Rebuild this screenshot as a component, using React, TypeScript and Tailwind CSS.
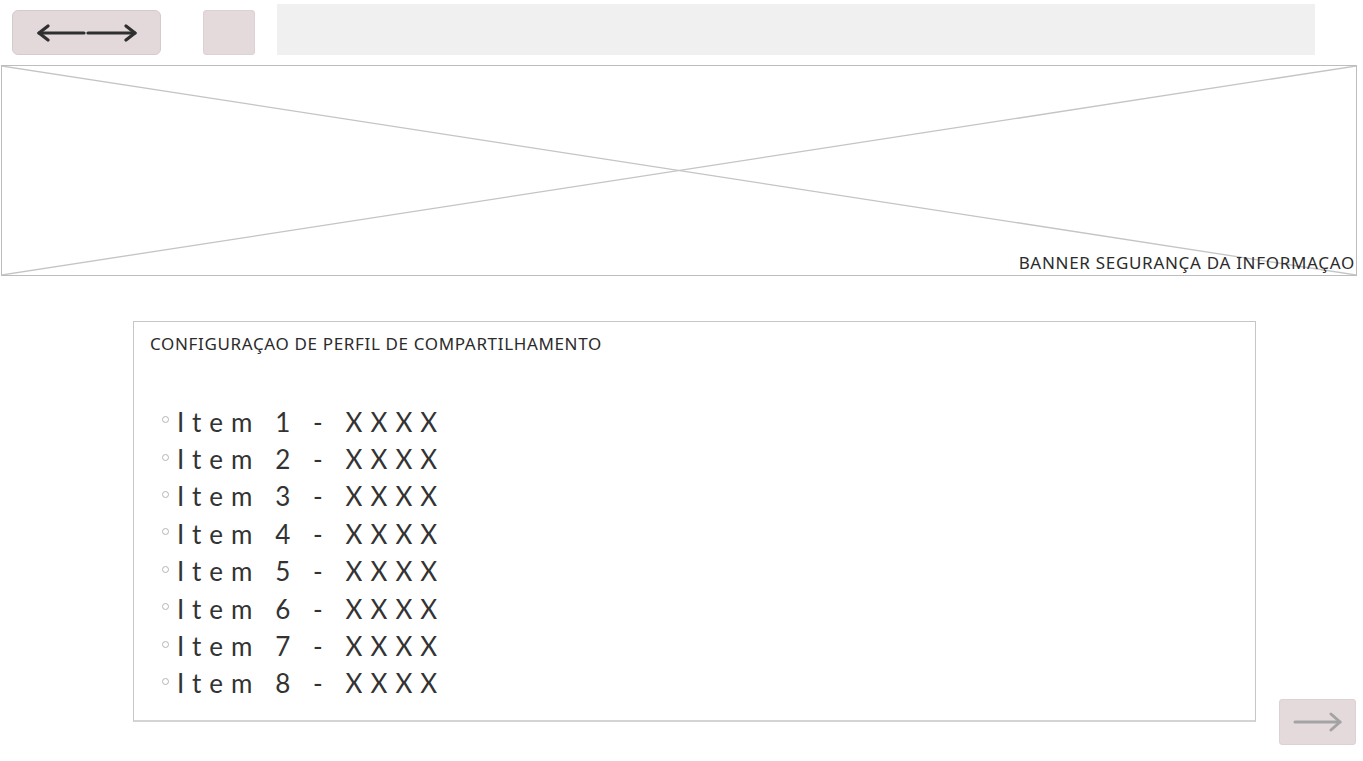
import React from "react";

const items = [1, 2, 3, 4, 5, 6, 7, 8];

function DoubleArrow() {
  return (
    <svg width="100" height="20" viewBox="0 0 100 20" fill="none" stroke="#2f2f2f" strokeWidth="3.2" strokeLinecap="round" strokeLinejoin="round">
      <path d="M2 10 H47" />
      <path d="M11 3 L2 10 L11 17" />
      <path d="M51 10 H98" />
      <path d="M89 3 L98 10 L89 17" />
    </svg>
  );
}

function NextArrow() {
  return (
    <svg width="50" height="20" viewBox="0 0 50 20" fill="none" stroke="#a3a3a3" strokeWidth="3" strokeLinecap="round" strokeLinejoin="round">
      <path d="M2 10 H47" />
      <path d="M38 2 L47 10 L38 18" />
    </svg>
  );
}

export default function App() {
  return (
    <div className="w-[1363px] h-[761px] bg-white overflow-hidden font-['Noto_Sans',sans-serif] text-[#333]">
      {/* top bar */}
      <div className="flex items-start pt-[4px]">
        <button className="mt-[6px] ml-[12px] w-[149px] h-[45px] rounded-[6px] bg-[#e3d8da] border border-[#d6cacd] flex items-center justify-center">
          <DoubleArrow />
        </button>
        <div className="mt-[6px] ml-[42px] w-[52px] h-[45px] rounded-[3px] bg-[#e4dadc] border border-[#dcd1d3]" />
        <div className="ml-[22px] w-[1038px] h-[51px] bg-[#f0f0f0]" />
      </div>

      {/* banner */}
      <div className="relative mt-[10px] ml-[1px] w-[1356px] h-[211px] border border-[#bdbdbd] flex items-end justify-end">
        <svg className="absolute inset-0 w-full h-full" viewBox="0 0 1354 209" preserveAspectRatio="none">
          <line x1="0" y1="0" x2="1354" y2="209" stroke="#c4c4c4" strokeWidth="1.3" />
          <line x1="1354" y1="0" x2="0" y2="209" stroke="#c4c4c4" strokeWidth="1.3" />
        </svg>
        <span className="relative pr-[1px] pb-[1px] text-[17px] leading-[22px] tracking-[0.7px] text-[#2b2b2b]">
          BANNER SEGURANÇA DA INFORMAÇAO
        </span>
      </div>

      {/* content */}
      <div className="flex items-start mt-[45px]">
        <div className="ml-[133px] w-[1123px] h-[401px] border border-[#c6c6c6] border-b-2 border-b-[#d4d4d4] pt-[11px] pl-[16px]">
          <div className="text-[17px] leading-[22px] tracking-[0.65px] text-[#2b2b2b]">
            CONFIGURAÇAO DE PERFIL DE COMPARTILHAMENTO
          </div>
          <ul className="mt-[48px] font-['Lato',sans-serif]">
            {items.map((n) => (
              <li key={n} className="flex items-center h-[37.4px]">
                <span className="ml-[12px] mb-[4px] w-[7px] h-[7px] rounded-full border border-[#b5b5b5]" />
                <span className="ml-[8px] text-[26px] leading-none tracking-[0.31em] text-[#333]">
                  Item {n} - XXXX
                </span>
              </li>
            ))}
          </ul>
        </div>
        <button className="ml-[23px] mt-[378px] w-[77px] h-[46px] rounded-[3px] bg-[#e4dadc] border border-[#dcd1d3] flex items-center justify-center">
          <NextArrow />
        </button>
      </div>
    </div>
  );
}
